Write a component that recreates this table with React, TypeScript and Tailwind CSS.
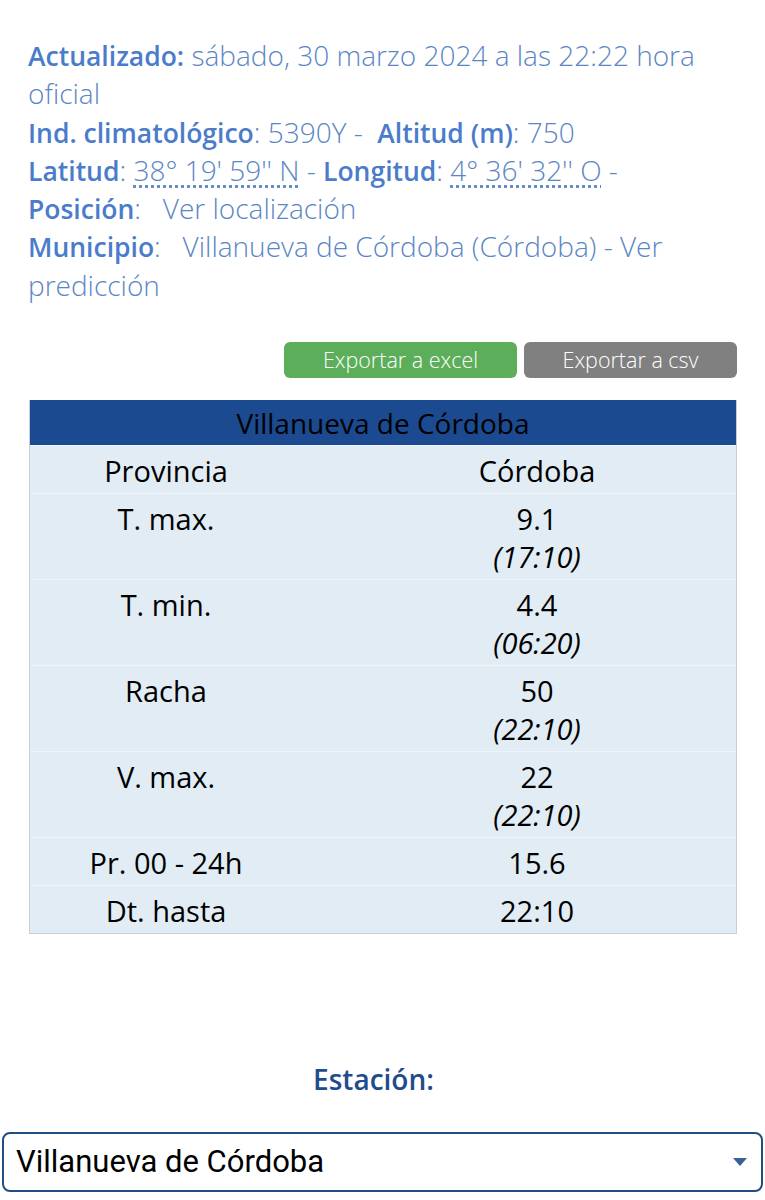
interface Row {
  label: string;
  value: string;
  time?: string;
}

const rows: Row[] = [
  { label: "Provincia", value: "Córdoba" },
  { label: "T. max.", value: "9.1", time: "(17:10)" },
  { label: "T. min.", value: "4.4", time: "(06:20)" },
  { label: "Racha", value: "50", time: "(22:10)" },
  { label: "V. max.", value: "22", time: "(22:10)" },
  { label: "Pr. 00 - 24h", value: "15.6" },
  { label: "Dt. hasta", value: "22:10" },
];

// bold label in the station header
function Label({ children }: { children: React.ReactNode }) {
  return <b className="font-semibold text-[26.5px] leading-none text-[#4a7ccb]">{children}</b>;
}

export default function App() {
  return (
    <div className="min-h-screen bg-white font-['Open_Sans',sans-serif]">
      {/* Station info */}
      <div className="px-[28px] pt-[36px] text-[28px] leading-[38.3px] text-[#5b86c4] font-light">
        <p>
          <Label>Actualizado:</Label> sábado, 30 marzo 2024 a las 22:22 hora oficial
        </p>
        <p>
          <Label>Ind. climatológico</Label>: 5390Y -&nbsp; <Label>Altitud (m)</Label>: 750
        </p>
        <p>
          <Label>Latitud</Label>:{" "}
          <span className="underline decoration-dotted underline-offset-[4px]">38° 19' 59'' N</span> -{" "}
          <Label>Longitud</Label>:{" "}
          <span className="underline decoration-dotted underline-offset-[4px]">4° 36' 32'' O</span> -
        </p>
        <p>
          <Label>Posición</Label>:&nbsp;&nbsp; Ver localización
        </p>
        <p>
          <Label>Municipio</Label>:&nbsp;&nbsp; Villanueva de Córdoba (Córdoba) - Ver predicción
        </p>
      </div>

      {/* Export buttons */}
      <div className="flex justify-end gap-[7px] pr-[28px] mt-[38px]">
        <button className="w-[233px] h-[36px] rounded-[6px] bg-[#5cae5a] text-white font-light text-[21.5px]">
          Exportar a excel
        </button>
        <button className="w-[213px] h-[36px] rounded-[6px] bg-[#808080] text-white font-light text-[21.5px]">
          Exportar a csv
        </button>
      </div>

      {/* Data table */}
      <div className="mx-[29px] mt-[22px] w-[708px] border border-[#c8cfd6] border-t-0">
        <div className="h-[45px] bg-[#1b4a90] flex items-center justify-center text-[28px] text-black">
          Villanueva de Córdoba
        </div>
        {rows.map((r) => (
          <div
            key={r.label}
            className="grid grid-cols-[272px_1fr] bg-[#e1ecf4] border-t border-[#eef4f9] text-[29px] text-black leading-[38px] pt-[6px] pb-[3px] [font-stretch:93%]"
          >
            <div className="text-center">{r.label}</div>
            <div className="text-center pl-[36px]">
              <div>{r.value}</div>
              {r.time && <div className="italic">{r.time}</div>}
            </div>
          </div>
        ))}
      </div>

      {/* Station selector */}
      <div className="mt-[124px] pr-[18px] text-center text-[28px] font-semibold text-[#1f4c8c]">Estación:</div>
      <div className="mx-[2px] mt-[32px] h-[60px] rounded-[8px] border-2 border-[#224c82] flex items-center justify-between pl-[12px] pr-[14px]">
        <span className="text-[31px] text-black font-['Roboto',sans-serif]">Villanueva de Córdoba</span>
        <svg width="14" height="8" viewBox="0 0 14 8">
          <path d="M0 0 L14 0 L7 8 Z" fill="#3a5f96" />
        </svg>
      </div>
    </div>
  );
}
